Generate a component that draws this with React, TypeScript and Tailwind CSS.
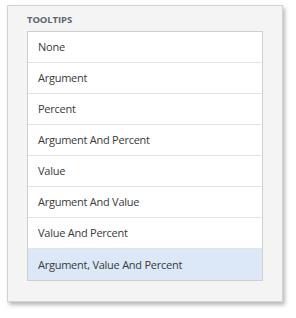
import React from 'react';

const items = [
  'None',
  'Argument',
  'Percent',
  'Argument And Percent',
  'Value',
  'Argument And Value',
  'Value And Percent',
  'Argument, Value And Percent',
];

const App: React.FC = () => {
  return (
    <div className="w-[296px] h-[318px] bg-white pl-[7px] pt-[5px]" style={{ fontFamily: '"Open Sans", "Liberation Sans", sans-serif' }}>
      <div className="w-[276px] h-[297px] bg-[#f4f4f4] border border-[#d3d3d3] shadow-[2px_3px_4px_rgba(0,0,0,0.28)] px-[19px] pt-[7px]">
        <div className="text-[9.5px] font-bold text-[#5c6573] leading-[14px] h-[18px] tracking-[-0.1px]">TOOLTIPS</div>
        <ul className="bg-white border border-[#cfcfcf]">
          {items.map((item, i) => (
            <li
              key={i}
              className={
                'h-[31px] flex items-center pl-[10px] pt-[1px] text-[11px] tracking-[-0.25px] text-[#3a3a3a] ' +
                (i < items.length - 1 ? 'border-b border-[#e3e3e3] ' : '') +
                (i === items.length - 1 ? 'bg-[#dce8f8]' : '')
              }
            >
              {item}
            </li>
          ))}
        </ul>
      </div>
    </div>
  );
};

export default App;
